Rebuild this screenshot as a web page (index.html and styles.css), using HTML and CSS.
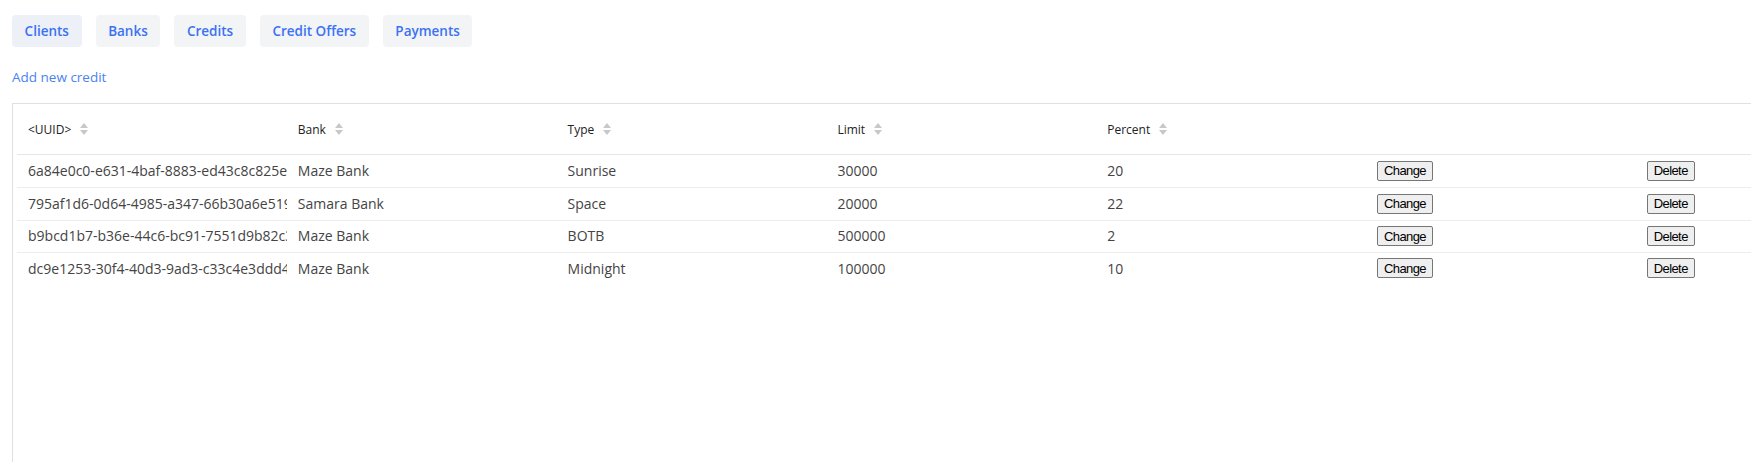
FILE: index.html
```html
<!DOCTYPE html>
<html lang="en">
<head>
<meta charset="utf-8">
<title>Credits</title>
<link rel="stylesheet" href="styles.css">
</head>
<body>
<nav class="tabs">
  <button class="tab tab-active">Clients</button>
  <button class="tab">Banks</button>
  <button class="tab">Credits</button>
  <button class="tab">Credit Offers</button>
  <button class="tab">Payments</button>
</nav>
<a class="add-link" href="#">Add new credit</a>
<div class="table-wrap">
  <div class="row row-head">
    <div class="cell"><span>&lt;UUID&gt;</span><svg class="sort" viewBox="0 0 8 12"><polygon points="4,0 8,5 0,5"/><polygon points="0,7 8,7 4,12"/></svg></div>
    <div class="cell"><span>Bank</span><svg class="sort" viewBox="0 0 8 12"><polygon points="4,0 8,5 0,5"/><polygon points="0,7 8,7 4,12"/></svg></div>
    <div class="cell"><span>Type</span><svg class="sort" viewBox="0 0 8 12"><polygon points="4,0 8,5 0,5"/><polygon points="0,7 8,7 4,12"/></svg></div>
    <div class="cell"><span>Limit</span><svg class="sort" viewBox="0 0 8 12"><polygon points="4,0 8,5 0,5"/><polygon points="0,7 8,7 4,12"/></svg></div>
    <div class="cell"><span>Percent</span><svg class="sort" viewBox="0 0 8 12"><polygon points="4,0 8,5 0,5"/><polygon points="0,7 8,7 4,12"/></svg></div>
    <div class="cell"></div>
    <div class="cell"></div>
  </div>
  <div class="row row-body">
    <div class="cell">6a84e0c0-e631-4baf-8883-ed43c8c825e1</div>
    <div class="cell">Maze Bank</div>
    <div class="cell">Sunrise</div>
    <div class="cell">30000</div>
    <div class="cell">20</div>
    <div class="cell"><button class="act">Change</button></div>
    <div class="cell"><button class="act">Delete</button></div>
  </div>
  <div class="row row-body">
    <div class="cell">795af1d6-0d64-4985-a347-66b30a6e5190</div>
    <div class="cell">Samara Bank</div>
    <div class="cell">Space</div>
    <div class="cell">20000</div>
    <div class="cell">22</div>
    <div class="cell"><button class="act">Change</button></div>
    <div class="cell"><button class="act">Delete</button></div>
  </div>
  <div class="row row-body">
    <div class="cell">b9bcd1b7-b36e-44c6-bc91-7551d9b82c3a</div>
    <div class="cell">Maze Bank</div>
    <div class="cell">BOTB</div>
    <div class="cell">500000</div>
    <div class="cell">2</div>
    <div class="cell"><button class="act">Change</button></div>
    <div class="cell"><button class="act">Delete</button></div>
  </div>
  <div class="row row-body">
    <div class="cell">dc9e1253-30f4-40d3-9ad3-c33c4e3ddd42</div>
    <div class="cell">Maze Bank</div>
    <div class="cell">Midnight</div>
    <div class="cell">100000</div>
    <div class="cell">10</div>
    <div class="cell"><button class="act">Change</button></div>
    <div class="cell"><button class="act">Delete</button></div>
  </div>
</div>
</body>
</html>
```
FILE: styles.css
```css
html, body {
  margin: 0;
  background: #ffffff;
}
body {
  padding: 15px 0 0 12px;
  font-family: "Open Sans", "Noto Sans", sans-serif;
  overflow: hidden;
}
.tabs {
  display: flex;
  gap: 14px;
}
.tab {
  height: 32px;
  padding: 0 12.6px;
  border: 0;
  border-radius: 4px;
  background: #f3f4f6;
  color: #3b72f4;
  font-family: "Open Sans", sans-serif;
  font-weight: 600;
  font-size: 13.5px;
}
.tab-active {
  background: #edf0f7;
}
.add-link {
  display: block;
  width: max-content;
  margin-top: 20px;
  line-height: 20px;
  font-size: 13.5px;
  color: #4a82f5;
  text-decoration: none;
}
.table-wrap {
  margin-top: 16px;
  width: max-content;
  min-height: 420px;
  border: 1px solid #e0e0e0;
  padding-left: 4px;
}
.row {
  display: grid;
  grid-template-columns: repeat(7, 269.8px);
  align-items: center;
  box-sizing: border-box;
}
.cell {
  padding-left: 11px;
  overflow: hidden;
  white-space: nowrap;
}
.row-head {
  height: 51px;
  border-bottom: 1px solid #e6e6e6;
  font-size: 12px;
  color: #222222;
}
.row-head .cell {
  display: flex;
  align-items: center;
  gap: 9px;
}
.sort {
  width: 8px;
  height: 12px;
  fill: #c8c8c8;
}
.row-body {
  height: 32.33px;
  padding-bottom: 1px;
  font-size: 14px;
  color: #444444;
}
.row-body + .row-body {
  border-top: 1px solid #ededed;
}
.act {
  height: 20px;
  padding: 0 6px;
  border: 1px solid #767676;
  border-radius: 2px;
  background: #efefef;
  color: #000000;
  font-family: "Liberation Sans", Arial, sans-serif;
  font-size: 13px;
  letter-spacing: -0.6px;
}
```
